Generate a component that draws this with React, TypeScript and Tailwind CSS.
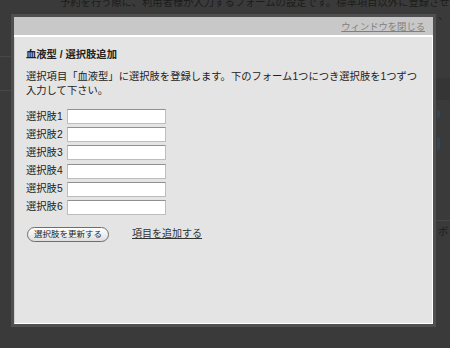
import React from "react";

const FONT = { fontFamily: "'Liberation Sans', 'Noto Sans CJK JP', sans-serif" };

export default function App() {
  const rows = [1, 2, 3, 4, 5, 6];
  return (
    <div
      className="relative w-[450px] h-[348px] overflow-hidden bg-[#3a3a3a]"
      style={FONT}
    >
      {/* dimmed page behind the overlay */}
      <div className="flex flex-col h-full">
        <div className="-mt-[4px] h-[14px] pl-[60px] whitespace-nowrap text-[10.3px] leading-[14px] text-[#1c1c1c]">
          予約を行う際に、利用者様が入力するフォームの設定です。標準項目以外に登録させたい
        </div>
        <div className="flex flex-1">
          <div className="w-[11px] shrink-0 flex flex-col">
            <div className="h-[46px]" />
            <div className="h-px bg-[#474747]" />
            <div className="h-[33px]" />
            <div className="h-px bg-[#474747]" />
          </div>
          <div className="flex-1" />
          <div className="w-[14px] shrink-0 flex flex-col">
            <div className="pl-[2px] text-[10.3px] leading-[12px] text-[#1c1c1c]">、</div>
            <div className="h-[56px]" />
            <div className="h-[22px] bg-[#353535]" />
            <div className="h-[10px]" />
            <div className="ml-[1px] h-[8px] w-[3px] rounded-r-[2px] bg-[#34465a]" />
            <div className="h-[19px]" />
            <div className="ml-[1px] h-[13px] w-[3px] rounded-r-[2px] bg-[#34465a]" />
            <div className="h-[70px]" />
            <div className="h-px bg-[#474747]" />
            <div className="pl-[2px] pt-[4px] text-[10.3px] leading-[14px] text-[#1c1c1c]">ボ</div>
          </div>
        </div>
      </div>

      {/* modal window */}
      <div className="absolute left-[11px] top-[14px] w-[425px] h-[313px] border-[3px] border-[#4f4f4f] flex flex-col">
        <div className="h-[18px] bg-[#c8c8c8] flex items-center justify-end pr-[8px] pt-[1px]">
          <span className="text-[9.3px] leading-[12px] text-[#808080] underline">
            ウィンドウを閉じる
          </span>
        </div>
        <div className="h-[2px] bg-white" />
        <div className="flex-1 bg-[#e4e4e4] border-l border-l-[#cfcfcf] border-r border-r-white border-b border-b-white pl-[11px] pt-[11px] text-[#222] text-[10.3px] leading-[14px]">
          <div className="font-bold">血液型 / 選択肢追加</div>
          <p className="mt-[8px]">
            選択項目「血液型」に選択肢を登録します。下のフォーム1つにつき選択肢を1つずつ
            <br />
            入力して下さい。
          </p>
          <div className="mt-[11px] flex flex-col gap-[3.2px]">
            {rows.map((n) => (
              <div key={n} className="flex items-center h-[15px]">
                <span className="w-[41px] shrink-0">選択肢{n}</span>
                <div className="w-[99px] h-[15px] bg-white border border-[#bdbdbd] border-t-[#909090]" />
              </div>
            ))}
          </div>
          <div className="mt-[12px] flex items-center">
            <div className="ml-[1px] h-[15px] px-[6px] rounded-full border border-[#6e6e6e] bg-gradient-to-b from-white to-[#dedede] flex items-center text-[8.5px] leading-[10px] text-[#222]">
              選択肢を更新する
            </div>
            <span className="ml-[23px] text-[10px] leading-[14px] underline text-[#333]">
              項目を追加する
            </span>
          </div>
        </div>
      </div>
    </div>
  );
}
